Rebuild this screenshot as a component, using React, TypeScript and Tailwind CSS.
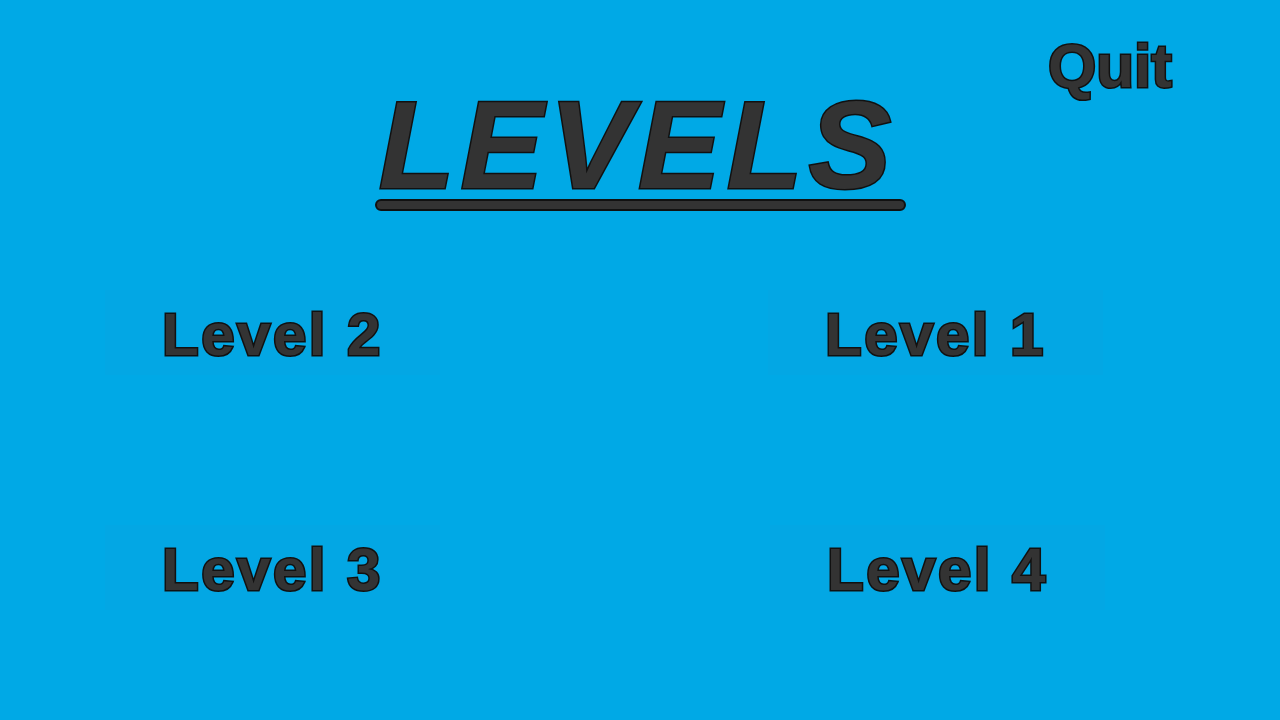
import React from 'react';

const outline = 'text-[#333333] [-webkit-text-stroke:3px_#111111] [paint-order:stroke_fill]';

function LevelButton({ label }: { label: string }) {
  return (
    <button
      type="button"
      className={`flex h-[85px] w-[335px] items-center justify-center bg-[#03a7e4] pt-[4px] font-['Liberation_Sans',Arial,sans-serif] text-[60px] leading-none font-bold tracking-[2.5px] ${outline}`}
    >
      {label}
    </button>
  );
}

export default function App() {
  return (
    <div className="flex h-[720px] w-[1280px] flex-col overflow-hidden bg-[#00a9e6] font-['Liberation_Sans',Arial,sans-serif]">
      <div className="grid grid-cols-[1fr_auto_1fr]">
        <div />
        <div className="flex flex-col items-center pt-[92px]">
          <h1 className={`pr-[4px] text-[124px] leading-[107px] font-bold tracking-[6px] italic ${outline}`}>LEVELS</h1>
          <div className="h-[12px] w-[531px] rounded-full border-2 border-[#111111] bg-[#333333]" />
        </div>
        <div className="flex justify-end pr-[108px] pt-[35px]">
          <button type="button" className={`h-fit text-[62px] leading-none font-bold ${outline}`}>
            Quit
          </button>
        </div>
      </div>

      <div className="mt-[79px] grid grid-cols-[335px_335px] gap-x-[325px] gap-y-[150px] pl-[105px]">
        <LevelButton label="Level 2" />
        <div className="pl-[3px]">
          <LevelButton label="Level 1" />
        </div>
        <LevelButton label="Level 3" />
        <div className="pl-[5px]">
          <LevelButton label="Level 4" />
        </div>
      </div>
    </div>
  );
}
